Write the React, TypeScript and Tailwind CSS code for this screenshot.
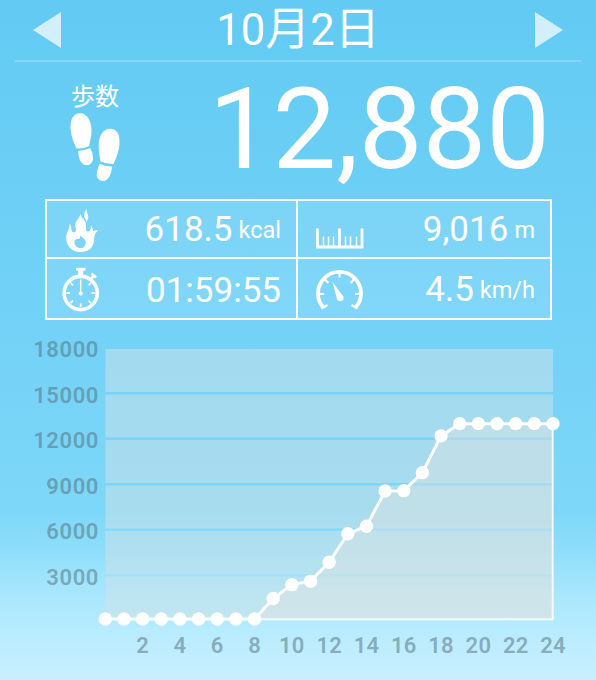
import React from 'react';

interface StatCellProps {
  icon: React.ReactNode;
  value: string;
  unit?: string;
  className?: string;
}

const HOURLY_STEPS = [
  0, 0, 0, 0, 0, 0, 0, 0, 0, 1350, 2270, 2500, 3750, 5630, 6130, 8460, 8480, 9670, 12100, 12910, 12910, 12910, 12910,
  12910, 12910,
];
const STEP_TICKS = [18000, 15000, 12000, 9000, 6000, 3000];
const HOUR_TICKS = [2, 4, 6, 8, 10, 12, 14, 16, 18, 20, 22, 24];
const BANDS = [
  [349, 43],
  [394.5, 43],
  [440, 43],
  [485.5, 43],
  [531, 43],
  [576.5, 43],
];

const LEFT = 105.3;
const RIGHT = 553;
const BASE = 619;

const hourX = (hour: number) => LEFT + (hour * (RIGHT - LEFT)) / 24;
const stepsY = (steps: number) => BASE - (steps * 45.4) / 3000;

const FootprintsIcon = () => (
  <svg className="block" width="52" height="72" viewBox="0 0 52 72" fill="white">
    <path d="M6.5 37.500C4 32 .5 24 .5 15.500C.5 7 4.500 2.300 10 2.300C17 2.300 21.500 10 21.500 19C21.500 26 19.800 30.500 19.200 35Q13 38 6.500 37.500Z" />
    <path d="M8.100 39.900Q14.500 39.500 20.300 37C22 40.500 23 44 23 47.500C22.800 51.500 20.500 54 17 54.300C11 54.300 8.200 47 8.100 39.900Z" />
    <path d="M30.300 50.300C30.200 46.500 28.700 42 28.700 35C28.700 25 33 17.800 40.500 17.800C46 17.800 49.500 22.500 49.500 30.500C49.500 40 46 47.500 43.500 53Q37 53.500 30.300 50.300Z" />
    <path d="M29.700 52.700Q35.500 55.500 41.900 55.500C41.800 62.500 38.500 70 33 70C29 70 26.700 67 26.700 63.500C26.700 59.500 28.300 56 29.700 52.700Z" />
  </svg>
);

const FlameIcon = () => (
  <svg width="48" height="48" viewBox="0 0 48 48" fill="white">
    <path d="M24.700 4C22.500 6.500 21.500 9 22.700 13C24.500 14.500 24 16 23.800 17.500C26.500 14.500 26.800 12 25.800 9.500C25 7.500 24.500 6 24.700 4Z" />
    <path
      fillRule="evenodd"
      d="M18.300 8C19 12 13.800 15 13.200 19.500C13 22 14.500 24 13.800 26C13 28 10.500 27.800 9.700 25.800C9 23.500 9.800 21 7.500 18.500C8.500 23 4.500 26.500 4.200 32C4 41 10 47 18.500 47C26.500 47 31.500 42.500 32 35.500C32.300 30 33 27.500 36.500 25.500C34 25 32.300 25.500 31 26.500C31.300 24 30.700 22 28.700 20.500C29 24 28 26.500 26 26.500C22.500 26.500 25 21 23.500 17.500C22 13.500 18.500 12.500 18.300 8ZM18 30.500C20.500 32.500 23.700 34 23.700 37.500C23.700 41 21.500 43 18.500 43C15 43 12.500 40.500 12.500 37.500C12.500 35 14 33.500 16 34C17.300 34.500 18.500 33 18 30.500Z"
    />
  </svg>
);

const StopwatchIcon = () => (
  <svg width="48" height="48" viewBox="0 0 48 48" fill="none" stroke="white">
    <circle cx="18.700" cy="28" r="16.600" strokeWidth="3.600" />
    <path d="M14 4.300H23.500" strokeWidth="2.800" />
    <path d="M18.700 4V12" strokeWidth="5" />
    <path d="M29.500 8.500L34 12.500M32.300 10.500L29 14" strokeWidth="2.800" />
    <path d="M18.700 14.500V28" strokeWidth="1.500" />
    <circle cx="18.700" cy="28.500" r="1.600" fill="white" strokeWidth="1" />
    <path
      d="M18.700 42V38.500M4.500 28H8M29.500 28H33M8.500 17.800L11 20.300M29 17.800L26.500 20.300M8.500 38.200L11 35.700M29 38.200L26.500 35.700"
      strokeWidth="1.800"
    />
  </svg>
);

const RulerIcon = () => (
  <svg width="48" height="48" viewBox="0 0 48 48" fill="none" stroke="white">
    <path d="M1.400 23.500V42H46V23.500M23.500 23.500V41" strokeWidth="2.800" />
    <path d="M7.500 31.500V41M12.500 31.500V41M17.500 31.500V41M29.500 31.500V41M34.500 31.500V41M40.500 31.500V41" strokeWidth="1.500" />
  </svg>
);

const GaugeIcon = () => (
  <svg width="48" height="48" viewBox="0 0 48 48" fill="none" stroke="white">
    <path d="M7.300 42.500A21.500 21.500 0 1 1 39.700 42.500" strokeWidth="3.800" />
    <path d="M23.500 7V12.500M2.500 29H8M39 29H44.500M8.500 14L12.500 18M38.500 14L34.500 18M5.500 43.500L11.500 40M41.500 43.500L35.500 40" strokeWidth="2.200" />
    <path d="M16.500 17L27.300 31.500A3.200 3.200 0 1 1 21 34Z" fill="white" stroke="none" />
  </svg>
);

const StatCell: React.FC<StatCellProps> = ({ icon, value, unit, className = '' }) => (
  <div className={`flex items-center justify-between pr-[15px] border-white ${className}`}>
    {icon}
    <div className="flex items-baseline gap-[6px] pt-[2px] leading-none">
      <span className="text-[35px]">{value}</span>
      {unit && <span className="text-[23.500px] pb-[3px] -translate-y-[3px]">{unit}</span>}
    </div>
  </div>
);

const StepsChart = () => {
  const points = HOURLY_STEPS.map((steps, hour) => `${hourX(hour)},${stepsY(steps)}`).join(' ');

  return (
    <svg className="block" width="596" height="350" viewBox="0 330 596 350">
      {BANDS.map(([y, height]) => (
        <rect key={y} x={LEFT} y={y} width={RIGHT - LEFT} height={height} fill="#d2e2e6" fillOpacity="0.5" />
      ))}
      <polygon points={`${points} ${RIGHT},${BASE} ${LEFT},${BASE}`} fill="#e4e4e1" fillOpacity="0.4" />
      <path d={`M${LEFT} ${BASE + 0.3}H${RIGHT - 0.3}V${stepsY(12910)}`} fill="none" stroke="white" strokeOpacity="0.8" strokeWidth="2" />
      <polyline points={points} fill="none" stroke="white" strokeWidth="3" />
      {HOURLY_STEPS.map((steps, hour) => (
        <circle key={hour} cx={hourX(hour)} cy={stepsY(steps)} r="6.700" fill="white" />
      ))}
      <g className="text-[22px] font-semibold" fill="#536c79" fillOpacity="0.52">
        {STEP_TICKS.map((tick, i) => (
          <text key={tick} x="99" y={357.4 + i * 45.5} textAnchor="end" letterSpacing="0.600">
            {tick}
          </text>
        ))}
        {HOUR_TICKS.map((tick) => (
          <text key={tick} x={hourX(tick)} y="652.700" textAnchor="middle" letterSpacing="0.200">
            {tick}
          </text>
        ))}
      </g>
    </svg>
  );
};

const App = () => (
  <div className="w-[596px] h-[680px] overflow-hidden flex flex-col text-white font-['Roboto','Noto_Sans_CJK_JP',sans-serif] bg-[linear-gradient(#62caf3_0px,#6acef4_150px,#74d2f7_340px,#7dd7f8_510px,#8edefa_550px,#abe8fd_600px,#bdedff_645px,#c8efff_680px)]">
    <header className="h-[62px] mx-[15px] border-b-2 border-[#7fd9fb] flex items-center justify-between pl-[18px] pr-[18px]">
      <svg width="28" height="36" viewBox="0 0 28 36" fill="#d3effb">
        <path d="M0 18L28 0V36Z" />
      </svg>
      <h1 className="text-[43.500px] leading-[60px] whitespace-nowrap">
        10<span className="text-[45px]">月</span>2<span className="text-[45px]">日</span>
      </h1>
      <svg width="28" height="36" viewBox="0 0 28 36" fill="#d3effb">
        <path d="M28 18L0 0V36Z" />
      </svg>
    </header>

    <section className="h-[137px] flex justify-between pl-[70px] pr-[46px]">
      <div className="pt-[21px]">
        <p className="text-2xl leading-[28px] pl-px">歩数</p>
        <FootprintsIcon />
      </div>
      <p className="text-[113.500px] leading-[136px]">12,880</p>
    </section>

    <section className="w-[507px] h-[121px] ml-[45px] shrink-0 grid grid-cols-[249px_1fr] grid-rows-[58px_1fr] border-2 border-white bg-white/10">
      <StatCell className="border-b-2 pl-[15px]" icon={<FlameIcon />} value="618.5" unit="kcal" />
      <StatCell className="border-b-2 border-l-2 pl-[18px]" icon={<RulerIcon />} value="9,016" unit="m" />
      <StatCell className="pl-[15px] pt-px" icon={<StopwatchIcon />} value="01:59:55" />
      <StatCell className="border-l-2 pl-[18px] pt-px" icon={<GaugeIcon />} value="4.5" unit="km/h" />
    </section>

    <section className="mt-[10px]">
      <StepsChart />
    </section>
  </div>
);

export default App;
